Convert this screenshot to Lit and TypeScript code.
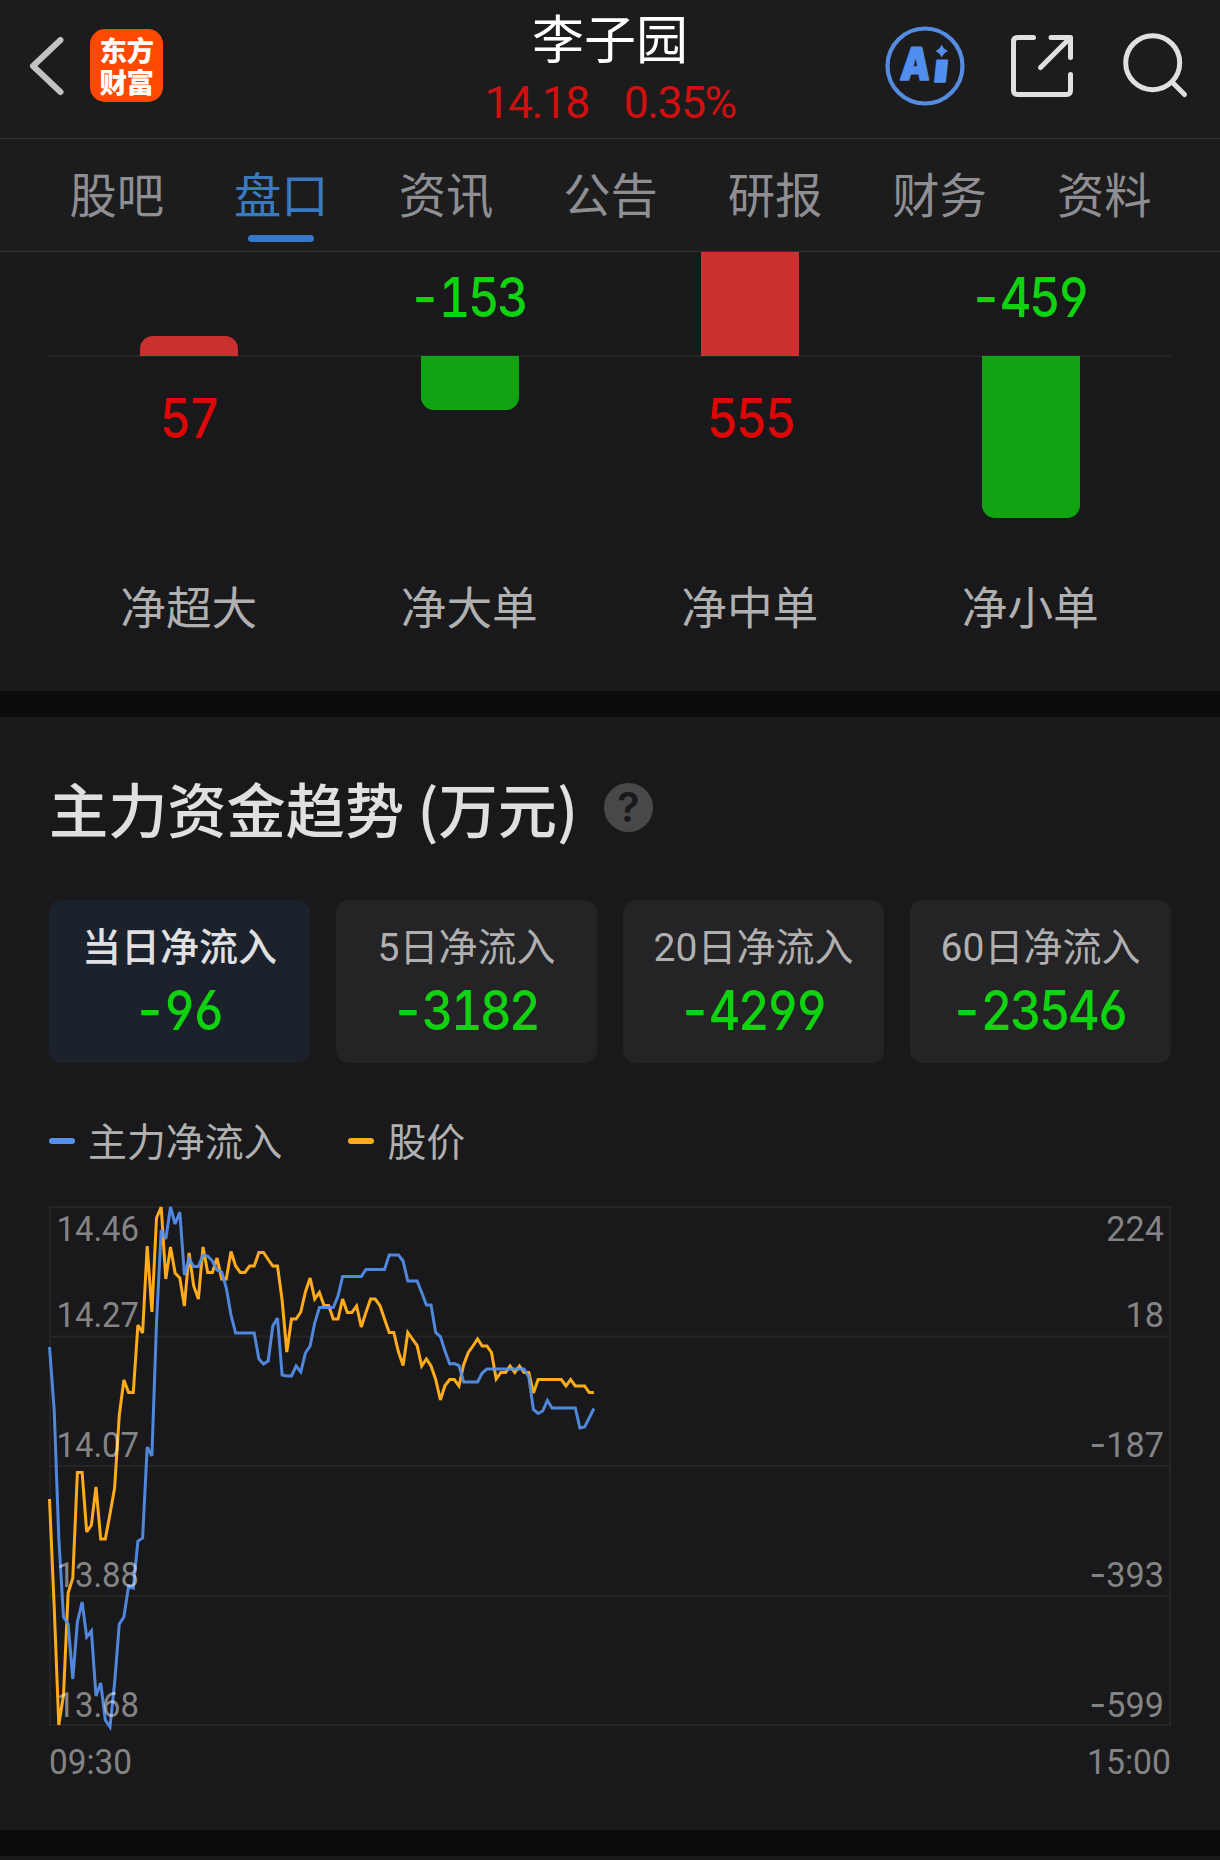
import { LitElement, html, svg, css } from "lit";
import { customElement, property } from "lit/decorators.js";
import { classMap } from "lit/directives/class-map.js";

const FONT = css`"Roboto", "Noto Sans CJK SC", sans-serif`;

// Large signed figures: condensed tabular digits with a wide minus sign.
const FIGURE = css`
  .num { font: 500 55.500px/60px "Inter", sans-serif; letter-spacing: -2.900px; font-feature-settings: "tnum", "cv03", "cv04"; transform: scaleX(0.88); white-space: nowrap; }
  .sign { display: inline-block; font-feature-settings: normal; letter-spacing: 0; transform: scaleX(1.1); margin: 0 3px 0 1px; }
`;
const figure = (v: number) =>
  html`<div class="num">${v < 0 ? html`<span class="sign">-</span>` : ""}${Math.abs(v)}</div>`;

interface Flow { label: string; value: number; bar: number; }
interface Period { label: string; value: number; active?: boolean; }

const TABS = ["股吧", "盘口", "资讯", "公告", "研报", "财务", "资料"];

const FLOWS: Flow[] = [
  { label: "净超大", value: 57, bar: 20 },
  { label: "净大单", value: -153, bar: 54 },
  { label: "净中单", value: 555, bar: 196 },
  { label: "净小单", value: -459, bar: 161.5 },
];

const PERIODS: Period[] = [
  { label: "当日净流入", value: -96, active: true },
  { label: "5日净流入", value: -3182 },
  { label: "20日净流入", value: -4299 },
  { label: "60日净流入", value: -23546 },
];

// One sample per minute; TOP is the value of the uppermost grid line.
const TOP = 1207;
const PRICE = [
  1499, 1607, 1725, 1695, 1593, 1578, 1472.5, 1472.5, 1532, 1525, 1487, 1539, 1539, 1514, 1488, 1415, 1380, 1392.5, 1392.5, 1325,
  1333, 1246, 1312, 1218, 1207, 1279, 1247, 1273, 1278, 1306, 1253, 1286, 1299, 1247, 1272.5, 1272.5, 1258, 1279, 1279, 1251.5,
  1266, 1272.5, 1272.5, 1266, 1266, 1252.5, 1252.5, 1259.5, 1266, 1266, 1300, 1352, 1319, 1319, 1312, 1292, 1278, 1299, 1292.5, 1305.5,
  1305.5, 1319, 1319, 1299, 1312.5, 1312.5, 1306, 1327, 1312.5, 1299, 1299, 1305.5, 1319, 1332.5, 1332.5, 1352, 1365.5, 1332.5, 1339, 1345.5,
  1366, 1359, 1366, 1379.5, 1400, 1385.5, 1379.5, 1379.5, 1386, 1365, 1352.5, 1346, 1339, 1346, 1346, 1352.5, 1379, 1372.5, 1372.5, 1366,
  1372.5, 1366, 1372.5, 1372.5, 1393, 1379.5, 1379.5, 1379.5, 1379.5, 1379.5, 1379.5, 1386, 1379.5, 1386, 1386, 1386, 1392.5, 1392.5,
];
const INFLOW = [
  1347, 1410, 1538, 1617, 1624, 1679, 1622, 1602, 1637, 1631, 1696, 1683, 1720, 1727, 1683, 1624, 1617, 1586, 1588, 1541,
  1538, 1447, 1456, 1323, 1230, 1239, 1207, 1224, 1212, 1275, 1259, 1266.5, 1266.5, 1255, 1256, 1261, 1270, 1272, 1288, 1315,
  1333, 1333, 1333, 1333, 1333, 1359, 1364, 1361, 1326, 1318, 1375, 1376, 1376, 1366, 1372, 1353, 1346, 1323, 1307.5, 1307.5,
  1307.5, 1307.5, 1296, 1276.5, 1276.5, 1276.5, 1276.5, 1276.5, 1269.5, 1269.5, 1269.5, 1269.5, 1269.5, 1255, 1255, 1255, 1261, 1281, 1281, 1281,
  1292.5, 1305, 1305, 1332.5, 1336.5, 1351, 1364, 1363.5, 1365.5, 1382, 1382, 1382, 1382, 1373, 1369, 1369, 1369, 1369, 1369, 1369,
  1369, 1369, 1369, 1377, 1409.5, 1413.5, 1411, 1400.5, 1408, 1408, 1408, 1408, 1408, 1408, 1428, 1427, 1418, 1408.5,
];
const toPoints = (ys: number[]) =>
  ys.map((y, i) => `${(0.5 + i * 4.653).toFixed(1)},${y - TOP}`).join(" ");

const GRID = [0, 129.5, 259, 389, 518];
const LABEL_Y = [34, 120, 250, 380, 510];
const LEFT = ["14.46", "14.27", "14.07", "13.88", "13.68"];
const RIGHT = ["224", "18", "-187", "-393", "-599"];

@customElement("stock-header")
class StockHeader extends LitElement {
  static styles = css`
    :host { display: grid; grid-template-columns: 1fr auto 1fr; height: 138px; background: #1c1c1c; border-bottom: 1px solid #343436; font-family: ${FONT}; }
    .left { display: flex; align-items: center; padding: 0 0 6px 26px; gap: 24px; }
    .logo { width: 73px; height: 73px; margin-bottom: 1px; box-sizing: border-box; border-radius: 15px; background: #ff4800; color: #fff; display: flex; flex-direction: column; align-items: center; justify-content: center; font: 900 27.500px/32px "Noto Sans CJK SC", sans-serif; letter-spacing: -0.500px; padding-bottom: 2px; }
    .mid { display: flex; flex-direction: column; align-items: center; }
    .name { color: #fff; font: 400 52px/74px "Noto Sans CJK SC", sans-serif; height: 77px; }
    .quote { display: flex; gap: 35px; color: #d01010; font-size: 44.500px; line-height: 52px; letter-spacing: -1.500px; white-space: nowrap; }
    .pct { letter-spacing: -1.500px; }
    .right { display: flex; justify-content: flex-end; align-items: flex-start; }
    svg { display: block; }
    .ai { font-family: "Inter", sans-serif; font-weight: 900; fill: #528eee; stroke: #528eee; stroke-width: 1.500; stroke-linejoin: round; }
  `;
  render() {
    return html`
      <div class="left">
        <svg width="40" height="60" viewBox="0 0 40 60" fill="none" stroke="#c2c2c2" stroke-width="6" stroke-linecap="round" stroke-linejoin="round"><path d="M34.5 4 7 30l27.500 26"/></svg>
        <div class="logo"><span>东方</span><span>财富</span></div>
      </div>
      <div class="mid">
        <div class="name">李子园</div>
        <div class="quote"><span class="price">14.18</span><span class="pct">0.35%</span></div>
      </div>
      <div class="right">
        <svg width="340" height="138" viewBox="880 0 340 138" fill="none">
          <circle cx="925" cy="66" r="37.500" stroke="#558be0" stroke-width="4.200"/>
          <g class="ai">
            <text transform="translate(899.500 79.500) skewX(-4)" font-size="45" textLength="30" lengthAdjust="spacingAndGlyphs">A</text>
            <text transform="translate(932.500 81.500) skewX(-6)" font-size="40" textLength="15" lengthAdjust="spacingAndGlyphs">ı</text>
          </g>
          <path d="M941.700 44.500 Q943.500 49 948 51 Q943.500 53 941.700 57.500 Q940 53 935.500 51 Q940 49 941.700 44.500Z" fill="#528eee"/>
          <g stroke="#e0e0e0" stroke-width="5" stroke-linecap="round" stroke-linejoin="round">
            <path d="M1033.500 37.500H1017.500Q1013.500 37.500 1013.500 41.500V90.500Q1013.500 94.500 1017.500 94.500H1066.500Q1070.500 94.500 1070.500 90.500V74.500"/>
            <path d="M1051 37.500H1070.500V57.500M1069.500 38.500 1040.500 67.500"/>
            <circle cx="1152.700" cy="62.700" r="27"/>
            <path d="M1173 83 1184.500 94.500"/>
          </g>
        </svg>
      </div>`;
  }
}

@customElement("stock-tabs")
class StockTabs extends LitElement {
  @property() selected = "盘口";
  static styles = css`
    :host { display: grid; grid-template-columns: repeat(7, 1fr); height: 112px; padding: 0 33.500px 0 34.500px; background: #1c1c1c; border-bottom: 1px solid #343436; font-family: ${FONT}; }
    .tab { display: flex; flex-direction: column; align-items: center; color: #8e8e93; font-size: 47.300px; line-height: 68px; padding-top: 24px; }
    .tab.on { color: #3a78c0; }
    .mark { width: 66px; height: 7px; border-radius: 4px; margin-top: 4px; }
    .on .mark { background: #3878c4; }
  `;
  render() {
    return TABS.map((t) => html`<div class=${classMap({ tab: true, on: t === this.selected })}><span>${t}</span><i class="mark"></i></div>`);
  }
}

@customElement("flow-bars")
class FlowBars extends LitElement {
  static styles = [FIGURE, css`
    :host { display: block; height: 439px; padding: 0 49px; background: #19191b; font-family: ${FONT}; }
    .cols { display: grid; grid-template-columns: repeat(4, 1fr); background: linear-gradient(#252527, #252527) 0 103px / 100% 2px no-repeat; }
    .col { display: grid; grid-template-rows: 104px 231px 46px; justify-items: center; }
    .up, .down { display: flex; flex-direction: column; align-items: center; width: 100%; min-height: 0; overflow: hidden; }
    .up { justify-content: flex-end; }
    .bar { width: 98px; flex: none; }
    .rise .bar { background: #cb3031; border-radius: 13px 13px 0 0; }
    .fall .bar { background: #12a312; border-radius: 0 0 13px 13px; }
    .rise .num { color: #dc0808; margin-top: 32px; }
    .fall .num { color: #10d210; margin-bottom: 29px; }
    .label { color: #b0b0b0; font-size: 45.700px; line-height: 46px; white-space: nowrap; margin-right: 1px; }
  `];
  render() {
    return html`<div class="cols">${FLOWS.map((f) => {
      const rise = f.value > 0;
      const bar = html`<div class="bar" style="height:${f.bar}px"></div>`;
      const num = figure(f.value);
      return html`<div class="col ${rise ? "rise" : "fall"}">
        <div class="up">${rise ? bar : num}</div>
        <div class="down">${rise ? num : bar}</div>
        <div class="label">${f.label}</div>
      </div>`;
    })}</div>`;
  }
}

@customElement("fund-trend")
class FundTrend extends LitElement {
  static styles = [FIGURE, css`
    :host { display: block; height: 1113px; box-sizing: border-box; padding: 55px 49px 0; background: #19191b; font-family: ${FONT}; }
    .title { display: flex; align-items: center; height: 70px; color: #e0e0e0; font: 500 59.200px/70px "Noto Sans CJK SC", sans-serif; }
    .title span { white-space: pre; }
    .help { display: flex; align-items: center; justify-content: center; width: 49px; height: 49px; border-radius: 50%; background: #48484b; color: #19191b; font: 600 41px/49px "Inter", sans-serif; margin-left: 26px; }
    .cards { display: grid; grid-template-columns: repeat(4, 1fr); gap: 26px; margin-top: 58px; }
    .card { display: flex; flex-direction: column; align-items: center; height: 163px; box-sizing: border-box; padding-top: 20px; border-radius: 13px; background: #242426; color: #b0b0b0; }
    .card.on { background: #1b222c; color: #e0e0e2; font-weight: 500; }
    .label { font-size: 39px; line-height: 56px; white-space: nowrap; }
    .num { margin-top: 4px; color: #10d210; }
    .legend { display: flex; gap: 66px; margin-top: 52px; height: 56px; }
    .key { display: flex; align-items: center; gap: 13px; color: #b0b0b0; font-size: 38.900px; line-height: 56px; }
    .dash { width: 26px; height: 6px; border-radius: 3px; margin-bottom: 4px; }
    .blue { background: #5590ee; }
    .amber { background: #ffab14; }
    .chart { display: block; margin-top: 36px; overflow: visible; }
    .grid { stroke: #252527; stroke-width: 2; fill: none; }
    .line { fill: none; stroke-width: 3; stroke-linejoin: miter; stroke-miterlimit: 3; }
    .price { stroke: #ffab1c; }
    .inflow { stroke: #5590ee; stroke-opacity: 0.92; }
    text { font-size: 34.200px; fill: #fff; fill-opacity: 0.47; }
    .minus { font-family: "Inter", sans-serif; font-size: 37px; }
  `];
  render() {
    return html`
      <div class="title"><span>主力资金趋势 (万元)</span><div class="help">?</div></div>
      <div class="cards">${PERIODS.map((p) => html`
        <div class=${classMap({ card: true, on: !!p.active })}>
          <div class="label">${p.label}</div>${figure(p.value)}
        </div>`)}</div>
      <div class="legend">
        <div class="key"><i class="dash blue"></i>主力净流入</div>
        <div class="key"><i class="dash amber"></i>股价</div>
      </div>
      <svg class="chart" width="1122" height="580" viewBox="0 0 1122 580">
        <g class="grid">
          <path d="M1 0V518M1121 0V518"/>
          ${GRID.map((y) => svg`<path d="M0 ${y}H1122"/>`)}
        </g>
        <polyline class="line price" points=${toPoints(PRICE)}></polyline>
        <polyline class="line inflow" points=${toPoints(INFLOW)}></polyline>
        ${LEFT.map((t, i) => svg`<text x="7.500" y=${LABEL_Y[i]} textLength="82.500" lengthAdjust="spacingAndGlyphs">${t}</text>`)}
        ${RIGHT.map((t, i) => svg`<text x="1115" y=${LABEL_Y[i]} text-anchor="end">${t.startsWith("-") ? svg`<tspan class="minus">-</tspan>` : ""}${t.replace("-", "")}</text>`)}
        <text x="0" y="567" textLength="83" lengthAdjust="spacingAndGlyphs">09:30</text>
        <text x="1038" y="567" textLength="84" lengthAdjust="spacingAndGlyphs">15:00</text>
      </svg>`;
  }
}

@customElement("app-root")
class AppRoot extends LitElement {
  static styles = css`
    :host { display: flex; flex-direction: column; width: 1220px; height: 1860px; overflow: hidden; background: #19191b; }
    .gap { height: 26px; background: #0c0c0c; flex: none; }
    stock-header, stock-tabs, flow-bars, fund-trend { flex: none; }
  `;
  render() {
    return html`
      <stock-header></stock-header>
      <stock-tabs></stock-tabs>
      <flow-bars></flow-bars>
      <div class="gap"></div>
      <fund-trend></fund-trend>
      <div class="gap"></div>`;
  }
}
